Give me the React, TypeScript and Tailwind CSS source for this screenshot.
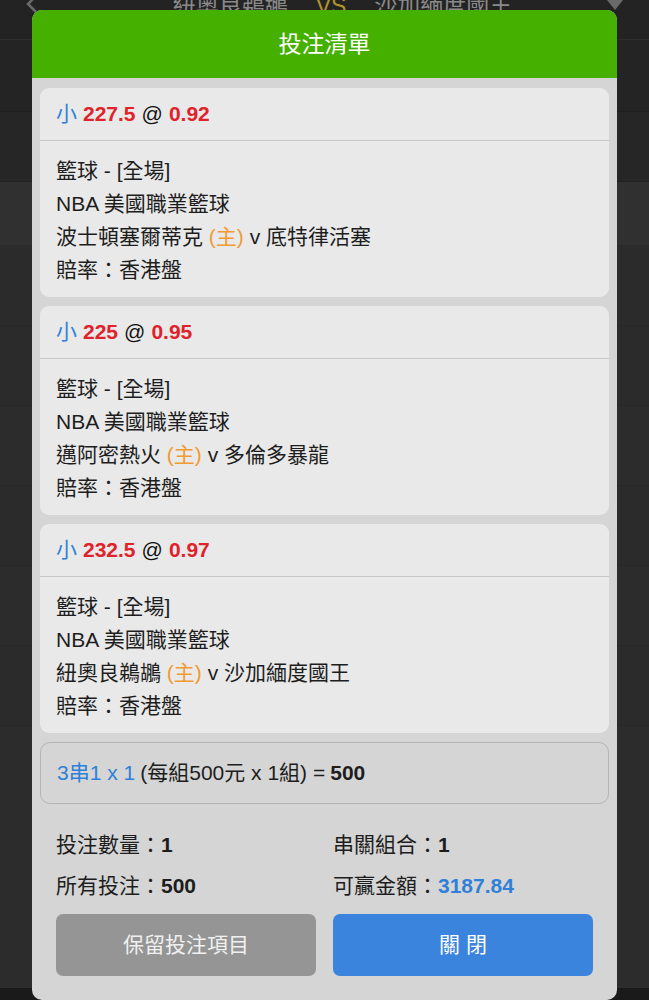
import React from "react";

const bets = [
  { line: "227.5", odds: "0.92", home: "波士頓塞爾蒂克", away: "底特律活塞" },
  { line: "225", odds: "0.95", home: "邁阿密熱火", away: "多倫多暴龍" },
  { line: "232.5", odds: "0.97", home: "紐奧良鵜鶘", away: "沙加緬度國王" },
];

const font = { fontFamily: '"Liberation Sans", "Noto Sans CJK TC", sans-serif' };

function BetCard({ line, odds, home, away }: { line: string; odds: string; home: string; away: string }) {
  return (
    <div className="rounded-[9px] bg-[#e9e9e9] overflow-hidden">
      <div className="h-[53px] flex items-center px-[16px] border-b border-[#c8c8c8] text-[21px]">
        <span className="text-[#2f80d8]">小</span>
        <span className="ml-[6px] font-bold text-[#e0222b]">{line}</span>
        <span className="ml-[6px] text-[#111]">@</span>
        <span className="ml-[6px] font-bold text-[#e0222b]">{odds}</span>
      </div>
      <div className="pt-[13px] pb-[11px] px-[16px] text-[21px] leading-[33px] text-[#1d1d1d]">
        <div>籃球 - [全場]</div>
        <div>NBA 美國職業籃球</div>
        <div>
          {home} <span className="text-[#f29a32]">(主)</span> v {away}
        </div>
        <div>賠率：香港盤</div>
      </div>
    </div>
  );
}

export default function App() {
  return (
    <div className="relative w-[649px] h-[1000px] overflow-hidden bg-[#2b2b2b]" style={font}>
      {/* background page */}
      <div className="flex flex-col h-full">
        <div className="h-[40px] bg-[#232323] border-b border-[#2e2e2e] overflow-hidden flex items-start">
          <svg width="20" height="20" viewBox="0 0 20 20" className="ml-[22px] -mt-[6px] shrink-0">
            <path d="M14 2 L6 10 L14 18" fill="none" stroke="#6a6a6a" strokeWidth="2.5" />
          </svg>
          <div className="flex-1 -mt-[8px] flex justify-center items-center gap-[28px] text-[23px] leading-[28px] pl-[38px]">
            <span className="text-[#8a8a8a]">紐奧良鵜鶘</span>
            <span className="text-[#b3932c]">VS</span>
            <span className="text-[#8a8a8a]">沙加緬度國王</span>
          </div>
          <svg width="20" height="20" viewBox="0 0 20 20" className="mr-[24px] -mt-[4px] shrink-0">
            <path d="M2 4 L18 4 L10 14 Z" fill="#6a6a6a" />
          </svg>
        </div>
        <div className="h-[72px] bg-[#242424] border-b border-[#1f1f1f]" />
        <div className="h-[70px] bg-[#262626] border-b border-[#222]" />
        <div className="h-[64px] bg-[#303030] border-b border-[#2a2a2a]" />
        <div className="h-[80px] bg-[#2b2b2b] border-b border-[#282828]" />
        <div className="h-[80px] bg-[#2b2b2b] border-b border-[#282828]" />
        <div className="h-[80px] bg-[#2c2c2c] border-b border-[#282828]" />
        <div className="h-[80px] bg-[#2b2b2b] border-b border-[#282828]" />
        <div className="h-[80px] bg-[#2c2c2c] border-b border-[#282828]" />
        <div className="h-[80px] bg-[#2b2b2b] border-b border-[#282828]" />
        <div className="flex-1 bg-[#2c2c2c]" />
        <div className="h-[12px] bg-[#1a1a1a]" />
      </div>

      {/* modal */}
      <div className="absolute left-[32px] top-[10px] w-[585px] h-[990px] rounded-[10px] bg-[#d5d5d5] overflow-hidden flex flex-col">
        <div className="h-[68px] bg-[#45b000] flex items-center justify-center text-white text-[23px]">
          投注清單
        </div>
        <div className="px-[8px] pt-[10px] flex flex-col gap-[9px]">
          {bets.map((b) => (
            <BetCard key={b.line} {...b} />
          ))}
          <div className="h-[62px] rounded-[10px] border border-[#b4b4b4] flex items-center px-[16px] text-[21px] text-[#1d1d1d]">
            <span className="text-[#2f80d8]">3串1 x 1</span>
            <span className="ml-[5px]">(每組500元 x 1組) =</span>
            <span className="ml-[5px] font-bold">500</span>
          </div>
        </div>
        <div className="px-[24px] pt-[20px] grid grid-cols-2 gap-x-[17px] text-[21px] text-[#1d1d1d] leading-[41px]">
          <div>
            投注數量：<span className="font-bold">1</span>
          </div>
          <div>
            串關組合：<span className="font-bold">1</span>
          </div>
          <div>
            所有投注：<span className="font-bold">500</span>
          </div>
          <div>
            可贏金額：<span className="font-bold text-[#2f80d8]">3187.84</span>
          </div>
        </div>
        <div className="px-[24px] pt-[8px] grid grid-cols-2 gap-x-[17px]">
          <button className="h-[62px] rounded-[7px] bg-[#959595] text-[#f0f0f0] text-[21px]">保留投注項目</button>
          <button className="h-[62px] rounded-[7px] bg-[#3a84de] text-white text-[21px]">關 閉</button>
        </div>
      </div>
    </div>
  );
}
